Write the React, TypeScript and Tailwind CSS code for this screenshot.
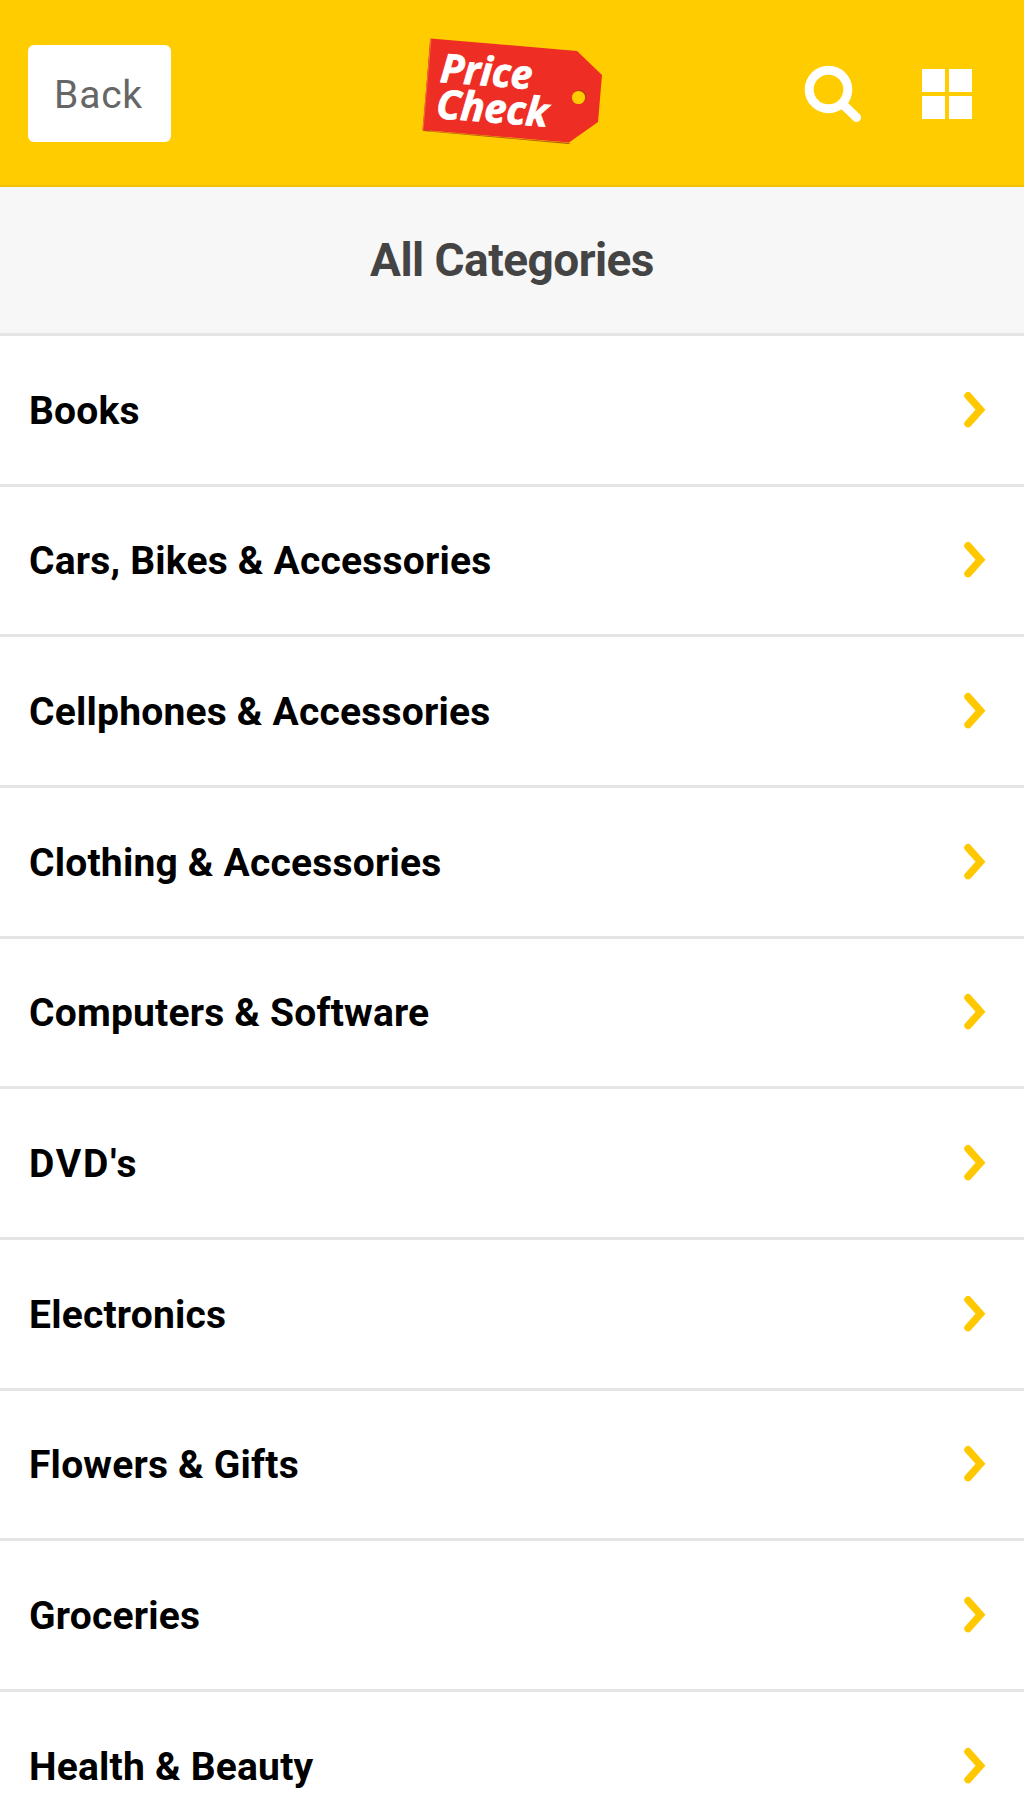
const categories = [
  'Books',
  'Cars, Bikes & Accessories',
  'Cellphones & Accessories',
  'Clothing & Accessories',
  'Computers & Software',
  "DVD's",
  'Electronics',
  'Flowers & Gifts',
  'Groceries',
  'Health & Beauty',
];

function Logo() {
  return (
    <svg className="h-[110px] w-[186px]" viewBox="0 0 186 110" role="img" aria-label="Price Check">
      <path d="M9 2 L2 93 L147 106 L150 105 L9 93 Z" fill="#9c3a12" opacity="0.75" />
      <path d="M9.5 0.5 L156 13 L181 37 L177 84 L148 104.5 L1.5 92 Z" fill="#ee2e24" />
      <path d="M10 1 L2 92" stroke="#f2703a" strokeWidth="1" />
      <circle cx="158.6" cy="58.6" r="6.8" fill="#b5400f" />
      <circle cx="157.5" cy="59.5" r="6.6" fill="#ffcc00" />
      <g fill="#fff" fontFamily="'Open Sans', 'Noto Sans', sans-serif" fontWeight="700" fontStyle="italic" fontSize="40" stroke="#fff" strokeWidth="0.8">
        <text x="18.5" y="44" textLength="92" lengthAdjust="spacingAndGlyphs" transform="rotate(4.5 19 44)">Price</text>
        <text x="14.5" y="80" textLength="112" lengthAdjust="spacingAndGlyphs" transform="rotate(4.5 15 80)">Check</text>
      </g>
    </svg>
  );
}

function SearchIcon() {
  return (
    <svg className="h-[58px] w-[58px]" viewBox="0 0 58 58" fill="none" stroke="#fff">
      <circle cx="24.5" cy="25.5" r="19.3" strokeWidth="9" />
      <path d="M39 40.5 L52.6 53.5" strokeWidth="9" strokeLinecap="round" />
    </svg>
  );
}

function Chevron() {
  return (
    <svg className="h-[38px] w-[24px] shrink-0" viewBox="0 0 24 38" fill="none" stroke="#ffc800" strokeWidth="7.4" strokeLinecap="round" strokeLinejoin="miter">
      <path d="M5 4.7 L17.5 18.7 L5 32.7" />
    </svg>
  );
}

export default function App() {
  return (
    <div className="h-[1820px] w-[1024px] overflow-hidden bg-white font-['Roboto',sans-serif]">
      <header className="grid h-[187px] grid-cols-3 items-start border-b-2 border-[#efc000] bg-[#ffcc00]">
        <div className="pt-[45px] pl-[28px]">
          <button className="flex h-[97px] w-[143px] items-center justify-center rounded-md bg-white pt-[4px] pr-[2px] text-[39px] leading-none tracking-[0.8px] text-[#666]">
            Back
          </button>
        </div>
        <div className="flex justify-center pt-[38px] pl-[5px]">
          <Logo />
        </div>
        <div className="flex justify-end pr-[52px]">
          <div className="pt-[64px] pr-[60px]">
            <SearchIcon />
          </div>
          <div className="mt-[69px] grid h-[50px] w-[50px] grid-cols-2 gap-1">
            <span className="bg-white" />
            <span className="bg-white" />
            <span className="bg-white" />
            <span className="bg-white" />
          </div>
        </div>
      </header>
      <h1 className="flex h-[149px] items-center justify-center border-b-[3px] border-[#e5e5e5] bg-[#f7f7f7] text-[46px] leading-none font-bold tracking-[-0.55px] text-[#444]">
        All Categories
      </h1>
      <ul>
        {categories.map((name) => (
          <li
            key={name}
            className="flex h-[150.67px] items-center justify-between border-b-[3px] border-[#e5e5e5] pr-[37px] pl-[29px] text-[39px] leading-none font-bold tracking-[0.2px] text-black"
          >
            <span className={name === "DVD's" ? 'pt-[3px] tracking-[1.8px]' : 'pt-[3px]'}>{name}</span>
            <Chevron />
          </li>
        ))}
      </ul>
    </div>
  );
}
